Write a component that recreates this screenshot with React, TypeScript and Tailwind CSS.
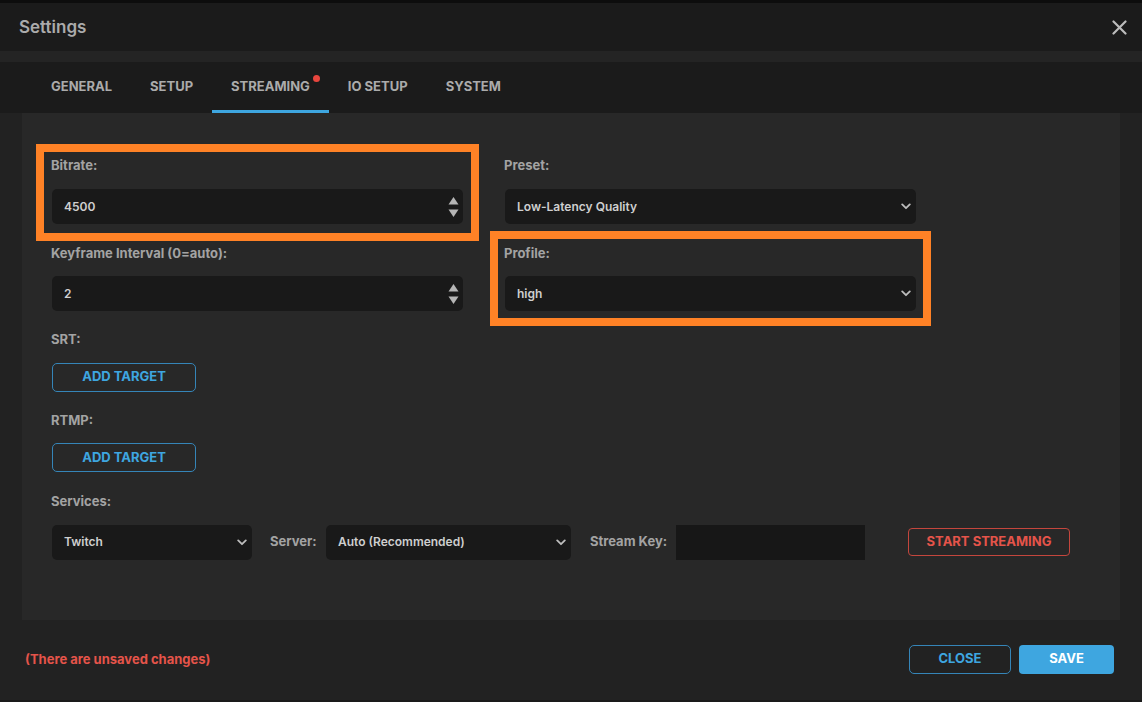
import React from "react";

const Chevron = () => (
  <svg width="10" height="7" viewBox="0 0 10 7" className="shrink-0">
    <path d="M1.2 1.4 L5 5.2 L8.8 1.4" fill="none" stroke="#bdbdbd" strokeWidth="1.8" strokeLinecap="round" strokeLinejoin="round" />
  </svg>
);

const Spinner = () => (
  <svg width="11" height="22" viewBox="0 0 11 22" className="shrink-0">
    <path d="M5.5 1 L10.5 8.5 L0.5 8.5 Z" fill="#b5b5b5" />
    <path d="M5.5 21 L10.5 13.5 L0.5 13.5 Z" fill="#b5b5b5" />
  </svg>
);

const Label = ({ children }: { children: React.ReactNode }) => (
  <div className="h-[16px] leading-[16px] text-[13px] font-bold text-[#a3a3a3] -ml-[1px]">{children}</div>
);

const NumberInput = ({ value }: { value: string }) => (
  <div className="h-[35px] w-full rounded-[5px] bg-[#191919] flex items-center justify-between pl-[12px] pr-[4px]">
    <span className="text-[12px] font-semibold text-[#cfcfcf]">{value}</span>
    <Spinner />
  </div>
);

const Select = ({ value, className = "" }: { value: string; className?: string }) => (
  <div className={"h-[35px] rounded-[5px] bg-[#191919] flex items-center justify-between pl-[12px] pr-[5px] " + className}>
    <span className="text-[12px] font-semibold text-[#cfcfcf]">{value}</span>
    <Chevron />
  </div>
);

const OutlineBlue = ({ children, className = "" }: { children: React.ReactNode; className?: string }) => (
  <div className={"h-[29px] rounded-[5px] border border-[#3585b8] flex items-center justify-center text-[13px] font-bold text-[#3ea6e0] " + className}>
    {children}
  </div>
);

export default function App() {
  const tabs = ["GENERAL", "SETUP", "STREAMING", "IO SETUP", "SYSTEM"];
  return (
    <div
      className="relative w-[1142px] h-[702px] overflow-hidden bg-[#222222] flex flex-col"
      style={{ fontFamily: "Inter, 'Noto Sans', sans-serif" }}
    >
      <div className="h-[3px] bg-[#0d0d0d]" />
      <div className="h-[48px] bg-[#1b1b1b] flex items-center justify-between pl-[19px] pr-[15px]">
        <span className="text-[17px] font-semibold text-[#ababab] mt-[2px]">Settings</span>
        <svg width="15" height="15" viewBox="0 0 15 15">
          <path d="M1.5 1.5 L13.5 13.5 M13.5 1.5 L1.5 13.5" stroke="#bcbcbc" strokeWidth="2.2" strokeLinecap="round" />
        </svg>
      </div>
      <div className="h-[11px] bg-[#242424]" />
      <div className="h-[51px] bg-[#1b1b1b] flex items-stretch pl-[32px]">
        {tabs.map((t) => {
          const active = t === "STREAMING";
          return (
            <div key={t} className="relative flex items-center px-[19px] pb-[4px]">
              <span className="relative text-[13px] leading-[16px] font-bold text-[#ababab]">
                {t}
                {active && (
                  <span className="absolute -right-[10px] -top-[3px] w-[7px] h-[7px] rounded-full bg-[#e8463e]" />
                )}
              </span>
              {active && <div className="absolute left-0 right-0 bottom-0 h-[3px] bg-[#3ea6e0]" />}
            </div>
          );
        })}
      </div>

      <div className="h-[507px] flex px-[22px]">
        <div className="flex-1 bg-[#282828] pl-[30px] pt-[44px] flex flex-col">
          <div className="grid grid-cols-[411px_411px] gap-x-[42px]">
            <div className="flex flex-col">
              <Label>Bitrate:</Label>
              <div className="mt-[16px]">
                <NumberInput value="4500" />
              </div>
            </div>
            <div className="flex flex-col">
              <Label>Preset:</Label>
              <div className="mt-[16px]">
                <Select value="Low-Latency Quality" className="w-full h-[34px]" />
              </div>
            </div>
            <div className="flex flex-col mt-[21px]">
              <Label>Keyframe Interval (0=auto):</Label>
              <div className="mt-[15px]">
                <NumberInput value="2" />
              </div>
            </div>
            <div className="flex flex-col mt-[21px]">
              <Label>Profile:</Label>
              <div className="mt-[15px]">
                <Select value="high" className="w-full" />
              </div>
            </div>
          </div>

          <div className="mt-[20px]">
            <Label>SRT:</Label>
          </div>
          <OutlineBlue className="mt-[15.5px] w-[144px]">ADD TARGET</OutlineBlue>
          <div className="mt-[20px]">
            <Label>RTMP:</Label>
          </div>
          <OutlineBlue className="mt-[15.5px] w-[144px]">ADD TARGET</OutlineBlue>
          <div className="mt-[21px]">
            <Label>Services:</Label>
          </div>
          <div className="mt-[15.5px] flex items-center">
            <Select value="Twitch" className="w-[200px]" />
            <span className="ml-[18px] w-[56px] text-[13px] font-bold text-[#a3a3a3]">Server:</span>
            <Select value="Auto (Recommended)" className="w-[245px]" />
            <span className="ml-[19px] w-[86px] text-[13px] font-bold text-[#a3a3a3]">Stream Key:</span>
            <div className="w-[189px] h-[35px] bg-[#171717]" />
            <div className="ml-[43px] w-[162px] h-[28px] rounded-[4px] border border-[#c4463d] flex items-center justify-center text-[13px] font-bold text-[#e5544a]">
              START STREAMING
            </div>
          </div>
        </div>
      </div>

      <div className="h-[82px] flex items-center justify-between pl-[25px] pr-[28px] pb-[2px] border-b-2 border-[#1a1a1a]">
        <span className="text-[13px] font-bold text-[#e5544a] mt-[2px]">(There are unsaved changes)</span>
        <div className="flex gap-[8px]">
          <OutlineBlue className="w-[102px]">CLOSE</OutlineBlue>
          <div className="w-[95px] h-[29px] rounded-[4px] bg-[#3ea6e0] flex items-center justify-center text-[13px] font-bold text-white">
            SAVE
          </div>
        </div>
      </div>

      <div className="absolute left-[36px] top-[144px] w-[443px] h-[97px] border-[8px] border-[#ff8226]" />
      <div className="absolute left-[490px] top-[231px] w-[441px] h-[95px] border-[8px] border-[#ff8226]" />
    </div>
  );
}
